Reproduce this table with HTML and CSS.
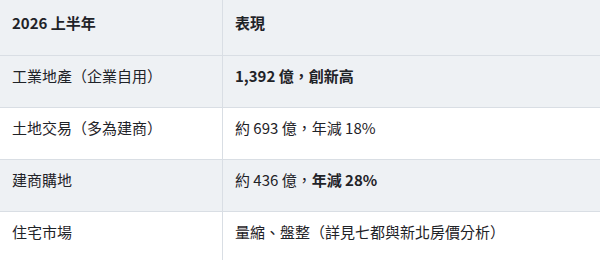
FILE: index.html
```html
<!DOCTYPE html>
<html lang="zh-Hant">
<head>
<meta charset="utf-8">
<link rel="stylesheet" href="styles.css">
</head>
<body>
<table class="data">
  <thead>
    <tr><th class="c1">2026 上半年</th><th>表現</th></tr>
  </thead>
  <tbody>
    <tr class="alt"><td class="c1">工業地產（企業自用）</td><td><strong>1,392 億，創新高</strong></td></tr>
    <tr><td class="c1">土地交易（多為建商）</td><td>約 693 億，年減 18%</td></tr>
    <tr class="alt"><td class="c1">建商購地</td><td>約 436 億，<strong>年減 28%</strong></td></tr>
    <tr><td class="c1">住宅市場</td><td>量縮、盤整（詳見七都與新北房價分析）</td></tr>
  </tbody>
</table>
</body>
</html>
```
FILE: styles.css
```css
html, body {
  margin: 0;
  padding: 0;
  background: #ffffff;
}
body {
  font-family: "Noto Sans CJK TC", "Noto Sans", sans-serif;
  font-size: 15px;
  color: #1f2328;
}
.data {
  width: 600px;
  border-collapse: collapse;
  table-layout: fixed;
}
.data th, .data td {
  text-align: left;
  line-height: 24px;
  padding: 8px 12px 19px;
  border-bottom: 1px solid #d9dee4;
  border-left: 1px solid #d9dee4;
  vertical-align: top;
}
.data th {
  font-weight: 700;
  background: #eef1f4;
  padding-top: 11px;
  padding-bottom: 20px;
}
.data .c1 {
  width: 198px;
  border-left: none;
}
.data tr.alt td {
  background: #eef1f4;
}
.data strong {
  font-weight: 700;
}
```
